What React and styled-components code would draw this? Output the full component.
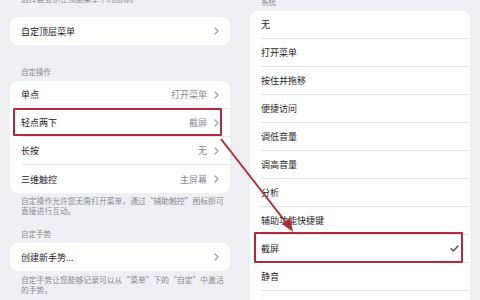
import React from 'react';
import styled, { createGlobalStyle } from 'styled-components';

const GlobalStyle = createGlobalStyle`
  html, body {
    margin: 0;
    padding: 0;
    background: #efeff3;
  }
  body {
    font-family: "Noto Sans CJK SC", "Noto Sans", sans-serif;
  }
`;

const Screen = styled.div`
  position: relative;
  width: 480px;
  height: 300px;
  overflow: hidden;
  display: grid;
  grid-template-columns: 240px 240px;
  background: #efeff3;
`;

const Column = styled.div`
  display: flex;
  flex-direction: column;
  padding: 0 10px;
`;

const Header = styled.div`
  font-size: 7.5px;
  line-height: 10px;
  color: #8a8a8e;
  padding-left: 11px;
  margin-top: ${(p) => p.$top}px;
`;

const Note = styled.div`
  font-size: 7.8px;
  line-height: 10px;
  color: #8a8a8e;
  padding: 0 6px 0 11px;
  margin-top: ${(p) => p.$top}px;
  white-space: nowrap;
`;

const Card = styled.div`
  background: #ffffff;
  border-radius: 8px;
  margin-top: ${(p) => p.$top}px;
  flex-shrink: 0;
`;

const Row = styled.div`
  position: relative;
  display: flex;
  height: 28px;
  padding-left: 11px;
`;

const RowInner = styled.div`
  flex: 1;
  display: flex;
  align-items: center;
  padding-right: 11px;
  border-bottom: ${(p) => (p.$last ? 'none' : '1px solid #e4e4e8')};
  box-sizing: border-box;
`;

const Label = styled.span`
  flex: 1;
  font-size: 9px;
  color: #1c1c1e;
`;

const Value = styled.span`
  font-size: 9px;
  color: #8a8a8e;
  margin-right: 7px;
`;

const Highlight = styled.div`
  position: absolute;
  left: ${(p) => p.$l}px;
  right: ${(p) => p.$r}px;
  top: ${(p) => p.$t}px;
  bottom: ${(p) => p.$b}px;
  border: 2px solid #b3283c;
  border-radius: 1px;
  pointer-events: none;
`;

const Overlay = styled.svg`
  position: absolute;
  left: 0;
  top: 0;
  pointer-events: none;
`;

const Chevron = () => (
  <svg width="5" height="8" viewBox="0 0 5 8">
    <polyline points="1,1 4,4 1,7" fill="none" stroke="#9a9a9f" strokeWidth="1.2" strokeLinecap="round" strokeLinejoin="round" />
  </svg>
);

const Check = () => (
  <svg width="9" height="7" viewBox="0 0 9 7">
    <polyline points="1,3.6 3.3,6 8,1" fill="none" stroke="#4a4a4f" strokeWidth="1.3" strokeLinecap="round" strokeLinejoin="round" />
  </svg>
);

const NavRow = ({ label, value, last, highlight }) => (
  <Row>
    <RowInner $last={last}>
      <Label>{label}</Label>
      {value && <Value>{value}</Value>}
      <Chevron />
    </RowInner>
    {highlight && <Highlight $l={3} $r={8} $t={-1} $b={1} />}
  </Row>
);

const actions = [
  ['单点', '打开菜单'],
  ['轻点两下', '截屏'],
  ['长按', '无'],
  ['三维触控', '主屏幕'],
];

const options = ['无', '打开菜单', '按住并拖移', '便捷访问', '调低音量', '调高音量', '分析', '辅助功能快捷键', '截屏', '静音', '摇动'];

export default function App() {
  return (
    <>
      <GlobalStyle />
      <Screen>
        <Column>
          <Note $top={-6}>选择要显示在顶层菜单中的图标。</Note>
          <Card $top={13}>
            <NavRow label="自定顶层菜单" last />
          </Card>
          <Header $top={22}>自定操作</Header>
          <Card $top={4}>
            {actions.map(([l, v], i) => (
              <NavRow key={l} label={l} value={v} last={i === actions.length - 1} highlight={l === '轻点两下'} />
            ))}
          </Card>
          <Note $top={3}>
            自定操作允许您无需打开菜单，通过“辅助触控”图标即可
            <br />
            直接进行互动。
          </Note>
          <Header $top={13}>自定手势</Header>
          <Card $top={4}>
            <NavRow label="创建新手势..." last />
          </Card>
          <Note $top={4}>
            自定手势让您能够记录可以从“菜单”下的“自定”中激活
            <br />
            的手势。
          </Note>
        </Column>
        <Column>
          <Header $top={-3}>系统</Header>
          <Card $top={4}>
            {options.map((o) => (
              <Row key={o}>
                <RowInner>
                  <Label>{o}</Label>
                  {o === '截屏' && <Check />}
                </RowInner>
                {o === '截屏' && <Highlight $l={4} $r={7} $t={-3} $b={0} />}
              </Row>
            ))}
          </Card>
        </Column>
        <Overlay width="480" height="300">
          <line x1="221" y1="139" x2="288" y2="225" stroke="#a8303c" strokeWidth="2" />
          <polygon points="293,232 282,224 290,218" fill="#a8303c" />
        </Overlay>
      </Screen>
    </>
  );
}
